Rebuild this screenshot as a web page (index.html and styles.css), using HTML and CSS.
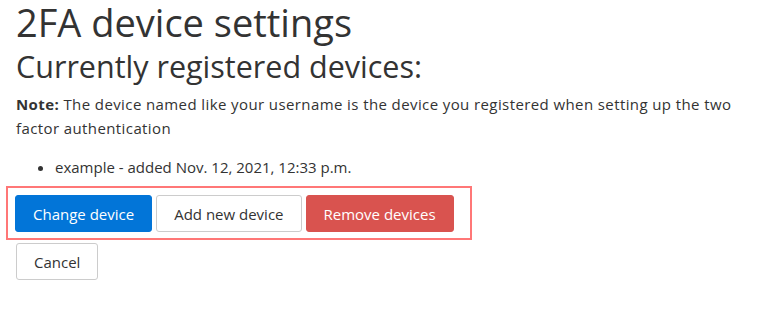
FILE: index.html
```html
<!DOCTYPE html>
<html lang="en">
<head>
  <meta charset="UTF-8">
  <title>2FA device settings</title>
  <link rel="stylesheet" href="styles.css">
</head>
<body>
  <div class="page">
    <h1>2FA device settings</h1>
    <h2>Currently registered devices:</h2>
    <p class="note">
      <strong>Note:</strong> The device named like your username is the device you registered when setting up the two factor authentication
    </p>
    <ul class="devices">
      <li>example - added Nov. 12, 2021, 12:33 p.m.</li>
    </ul>

    <!-- Device actions -->
    <div class="actions">
      <button type="button" class="btn btn-primary">Change device</button>
      <button type="button" class="btn btn-default">Add new device</button>
      <button type="button" class="btn btn-danger">Remove devices</button>
    </div>
    <div class="cancel-row">
      <button type="button" class="btn btn-default">Cancel</button>
    </div>
  </div>
</body>
</html>
```

FILE: styles.css
```css
/* Base */
* { box-sizing: border-box; }
html, body {
  margin: 0;
  padding: 0;
  background: #fff;
  color: #333;
  font-family: 'Open Sans', 'Noto Sans', sans-serif;
}

.page {
  padding: 0 16px;
}

/* Headings */
h1 {
  margin: 0;
  font-size: 38px;
  font-weight: 400;
  line-height: 44px;
}
h2 {
  margin: 2px 0 0;
  font-size: 30.5px;
  font-weight: 400;
  line-height: 40px;
}

/* Note and device list */
.note {
  margin: 6px 0 0;
  font-size: 15px;
  line-height: 24px;
  letter-spacing: 0.4px;
}
.note strong { font-weight: 700; }

.devices {
  margin: 15px 0 0;
  padding-left: 39px;
  font-size: 15px;
  line-height: 24px;
}

/* Buttons */
.actions {
  display: inline-flex;
  gap: 4px;
  margin: 7px 0 0 -10px;
  padding: 7px 16px 6px 7px;
  border: 2px solid #f77;
}
.cancel-row {
  margin-top: 3px;
}
.btn {
  font-family: inherit;
  font-size: 15px;
  height: 37px;
  padding: 0 17px;
  border: 1px solid #ccc;
  border-radius: 3px;
  background: #fff;
  color: #333;
  cursor: pointer;
}
.btn-primary {
  background: #0275d8;
  border-color: #0275d8;
  color: #fff;
}
.btn-danger {
  background: #d9534f;
  border-color: #d9534f;
  color: #fff;
}
```
